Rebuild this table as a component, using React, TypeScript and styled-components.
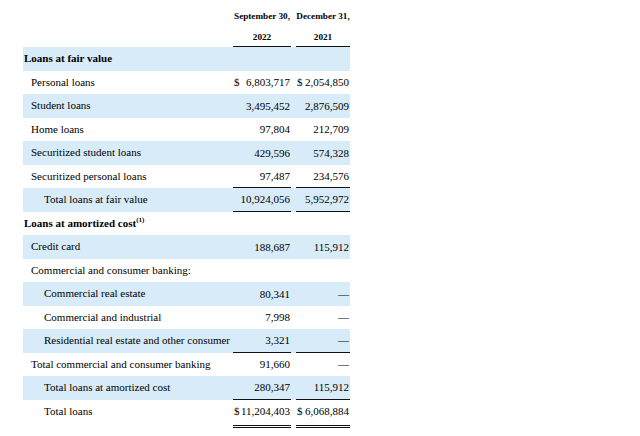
import styled, { createGlobalStyle } from 'styled-components';

const GlobalStyle = createGlobalStyle`
    html, body {
        margin: 0;
        padding: 0;
        background: #ffffff;
    }
    body {
        font-family: "Liberation Serif", "Times New Roman", serif;
        color: #000;
    }
`;

const Page = styled.div`
    padding-left: 23px;
    width: 327px;
`;

const Grid = styled.div`
    display: grid;
    grid-template-columns: 205px 58px 54px;
    column-gap: 5px;
`;

const Header = styled(Grid)`
    height: 47px;
`;

const ColHead = styled.div`
    display: flex;
    flex-direction: column;
    align-items: center;
    padding-top: 9px;
    border-bottom: 1px solid #111;
    box-sizing: border-box;
    font-size: 9.2px;
    font-weight: 700;
    line-height: 14px;
    white-space: nowrap;

    span + span {
        margin-top: 7px;
    }
`;

const Row = styled(Grid)<{ $shaded: boolean }>`
    background: ${(p) => (p.$shaded ? '#d7ebf9' : 'transparent')};
    align-items: start;
`;

const Label = styled.div<{ $indent: number; $bold?: boolean }>`
    height: 23.5px;
    line-height: 23.5px;
    padding-left: ${(p) => [1, 8, 21][p.$indent]}px;
    font-size: 11px;
    font-weight: ${(p) => (p.$bold ? 700 : 400)};
    white-space: nowrap;

    sup {
        font-size: 7px;
        line-height: 0;
        vertical-align: 5px;
    }
`;

const ValueCell = styled.div`
    display: flex;
    flex-direction: column;
`;

const Amount = styled.div<{ $rule?: boolean }>`
    display: flex;
    justify-content: space-between;
    align-items: center;
    height: 23.5px;
    box-sizing: border-box;
    padding: 0 1px 0 1px;
    font-size: 11px;
    white-space: nowrap;
    border-bottom: ${(p) => (p.$rule ? '1px solid #111' : 'none')};
`;

const DoubleRule = styled.div`
    margin-top: 2px;
    height: 3px;
    box-sizing: border-box;
    border-top: 1px solid #111;
    border-bottom: 1px solid #111;
`;

type Rule = 'single' | 'double' | undefined;

interface Line {
    label: string;
    indent: number;
    bold?: boolean;
    sup?: string;
    a?: string;
    b?: string;
    dollar?: boolean;
    rule?: Rule;
}

const lines: Line[] = [
    { label: 'Loans at fair value', indent: 0, bold: true },
    { label: 'Personal loans', indent: 1, a: '6,803,717', b: '2,054,850', dollar: true },
    { label: 'Student loans', indent: 1, a: '3,495,452', b: '2,876,509' },
    { label: 'Home loans', indent: 1, a: '97,804', b: '212,709' },
    { label: 'Securitized student loans', indent: 1, a: '429,596', b: '574,328' },
    { label: 'Securitized personal loans', indent: 1, a: '97,487', b: '234,576', rule: 'single' },
    { label: 'Total loans at fair value', indent: 2, a: '10,924,056', b: '5,952,972', rule: 'single' },
    { label: 'Loans at amortized cost', indent: 0, bold: true, sup: '(1)' },
    { label: 'Credit card', indent: 1, a: '188,687', b: '115,912' },
    { label: 'Commercial and consumer banking:', indent: 1 },
    { label: 'Commercial real estate', indent: 2, a: '80,341', b: '—' },
    { label: 'Commercial and industrial', indent: 2, a: '7,998', b: '—' },
    { label: 'Residential real estate and other consumer', indent: 2, a: '3,321', b: '—', rule: 'single' },
    { label: 'Total commercial and consumer banking', indent: 1, a: '91,660', b: '—' },
    { label: 'Total loans at amortized cost', indent: 2, a: '280,347', b: '115,912', rule: 'single' },
    { label: 'Total loans', indent: 2, a: '11,204,403', b: '6,068,884', dollar: true, rule: 'double' },
];

const Value = ({ value, dollar, rule }: { value?: string; dollar?: boolean; rule: Rule }) => (
    <ValueCell>
        <Amount $rule={rule === 'single'}>
            <span>{dollar ? '$' : ''}</span>
            <span>{value}</span>
        </Amount>
        {rule === 'double' && <DoubleRule />}
    </ValueCell>
);

export default function App() {
    return (
        <>
            <GlobalStyle />
            <Page>
                <Header>
                    <div />
                    <ColHead>
                        <span>September 30,</span>
                        <span>2022</span>
                    </ColHead>
                    <ColHead>
                        <span>December 31,</span>
                        <span>2021</span>
                    </ColHead>
                </Header>
                {lines.map((line, i) => (
                    <Row key={line.label} $shaded={i % 2 === 0}>
                        <Label $indent={line.indent} $bold={line.bold}>
                            {line.label}
                            {line.sup && <sup>{line.sup}</sup>}
                        </Label>
                        <Value value={line.a} dollar={line.dollar} rule={line.rule} />
                        <Value value={line.b} dollar={line.dollar} rule={line.rule} />
                    </Row>
                ))}
            </Page>
        </>
    );
}
